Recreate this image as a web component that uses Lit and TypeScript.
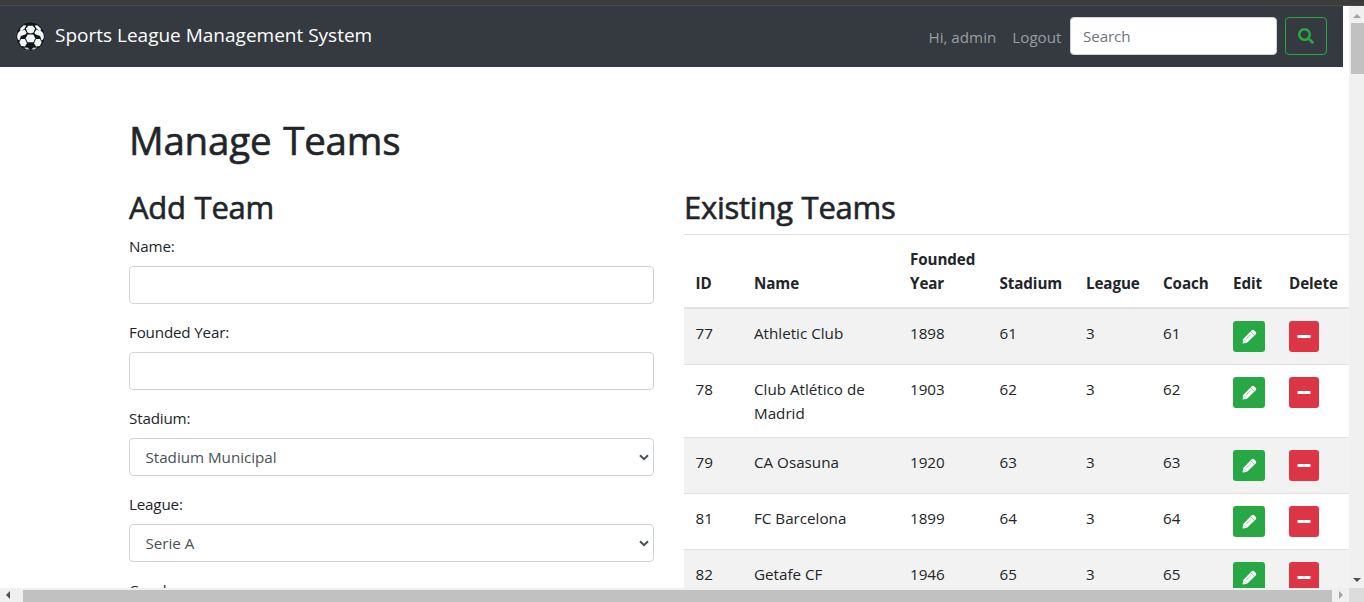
import { LitElement, html, css, svg } from "lit";
import { customElement } from "lit/decorators.js";

const TEAMS = [
  ["77", "Athletic Club", "1898", "61", "3", "61"],
  ["78", "Club Atlético de Madrid", "1903", "62", "3", "62"],
  ["79", "CA Osasuna", "1920", "63", "3", "63"],
  ["81", "FC Barcelona", "1899", "64", "3", "64"],
  ["82", "Getafe CF", "1946", "65", "3", "65"],
];

const HEADERS = ["ID", "Name", "Founded Year", "Stadium", "League", "Coach", "Edit", "Delete"];

const ball = html`<svg class="ball" viewBox="0 0 30 30">
  <circle cx="15" cy="15" r="14.3" fill="#10181b" stroke="#50575b" stroke-width=".7" />
  <g fill="#f4f4f4">
    <path d="M12.900 4.700h4.200l2.300 2.600-1.400 3.600-1.600.9h-2.800l-1.600-.9-1.400-3.600z" />
    <path d="M12.300 13h5.400l1.900 3.600-1.700 3.900h-5.800l-1.700-3.900z" />
    <path d="M5 7.200l3.400-3 2.500.2-1.700 3-4 3z" />
    <path d="M25 7.200l-3.400-3-2.500.2 1.700 3 4 3z" />
    <path d="M2 15.200l.8-3.600 2-2 4.600-1.200 1.900 3-1.300 1.700-4.300 1.400-1.400 4.300-1.500-1z" />
    <path d="M28 15.200l-.8-3.600-2-2-4.600-1.200-1.900 3 1.300 1.700 4.300 1.400 1.400 4.300 1.500-1z" />
    <path d="M5.800 17.300l3.800.2 2 4-2 3.200-3.600-.6-1.800-3.500z" />
    <path d="M24.200 17.300l-3.800.2-2 4 2 3.200 3.600-.6 1.800-3.500z" />
    <path d="M8.600 26l3.400-.3 2.400 1.900-3.300.1z" opacity=".8" />
    <path d="M21.400 26l-3.400-.3-2.400 1.900 3.300.1z" opacity=".8" />
  </g>
</svg>`;

const searchIcon = html`<svg class="search-icon" viewBox="0 0 512 512"><path fill="currentColor" d="M505 442.700L405.300 343c-4.500-4.500-10.600-7-17-7H372c27.600-35.300 44-79.700 44-128C416 93.100 322.900 0 208 0S0 93.100 0 208s93.100 208 208 208c48.300 0 92.700-16.400 128-44v16.300c0 6.400 2.500 12.500 7 17l99.700 99.700c9.400 9.400 24.600 9.400 33.900 0l28.300-28.300c9.400-9.400 9.400-24.600.1-34zM208 336c-70.700 0-128-57.200-128-128 0-70.700 57.200-128 128-128 70.700 0 128 57.200 128 128 0 70.700-57.200 128-128 128z"/></svg>`;

const pencil = html`<svg class="glyph" viewBox="0 0 16 16">
  <path fill="#fff" d="M10.400 1.400Q11.700.1 13 1.400L14.700 3.100Q15.900 4.400 14.700 5.700L5.700 14.400 1.400 15.500Q.5 15.600.6 14.700L1.500 10.300z"/>
  <path stroke="#28a745" stroke-width=".6" fill="none" d="M9.600 3.200l3.200 3.200M4.400 10.800l5.200-5.200M2.500 12l1.500 1.500"/>
</svg>`;

const minus = html`<svg class="glyph minus" viewBox="0 0 14 16"><rect x=".5" y="6" width="13" height="3" rx=".5" fill="#fff"/></svg>`;

const arrow = (d: string, fill: string, w: number, h: number) =>
  html`<svg width=${w} height=${h} viewBox="0 0 ${w} ${h}">${svg`<path d=${d} fill=${fill} />`}</svg>`;

@customElement("app-root")
export class AppRoot extends LitElement {
  static styles = css`
    :host {
      display: flex;
      flex-direction: column;
      width: 1364px;
      height: 602px;
      overflow: hidden;
      background: #fff;
      color: #212529;
      font: 15.200px/24px "Open Sans", "Noto Sans", sans-serif;
    }
    * { box-sizing: border-box; }
    svg { display: block; }
    .strip { flex: 0 0 6px; background: #3b3b3b; border-bottom: 1px solid #484a4b; }
    .window { flex: 1; min-height: 0; display: grid; grid-template: minmax(0, 1fr) 14px / 1349px 15px; }
    .page { overflow: hidden; }
    .navbar {
      display: flex; align-items: center; width: 1343px; height: 61px;
      padding: 0 16px 0 15px; background: #343a40;
    }
    .ball { width: 31px; height: 31px; }
    .brand { color: #fff; font-size: 19px; line-height: 30px; margin: -3px auto 0 9px; }
    .link { color: #9a9da0; margin-right: 16px; white-space: nowrap; }
    .link.last { margin-right: 8.500px; }
    .search {
      width: 207px; height: 38px; border: 1px solid #ced4da; border-radius: 4px; background: #fff;
      padding: 0 12px; font: inherit; color: #495057; margin-top: -1px;
    }
    .search::placeholder { color: #6c757d; opacity: 1; letter-spacing: -.1px; }
    .go {
      width: 42px; height: 38px; margin: -1px 0 0 8px; border: 1px solid #28a745; border-radius: 4px;
      color: #28a745; background: none; padding: 0; display: grid; place-items: center;
    }
    .search-icon { width: 16px; height: 16px; }
    .container { padding: 49px 0 0 129px; }
    h1, h2 { margin: 0; font-weight: 500; white-space: nowrap; -webkit-text-stroke: .6px #212529; }
    h1 { font-size: 38.500px; line-height: 48px; letter-spacing: -.2px; word-spacing: 2px; }
    h2 { font-size: 31px; line-height: 38px; margin-bottom: 8px; letter-spacing: -.25px; word-spacing: 1px; }
    .columns { display: grid; grid-template-columns: 525px 665px; column-gap: 30px; margin-top: 24px; }
    .field { display: flex; flex-direction: column; gap: 8px; margin-bottom: 16px; letter-spacing: -.18px; }
    .control { height: 38px; border: 1px solid #ced4da; border-radius: 4px; background: #fff; width: 100%; padding: 0 12px; font: inherit; }
    .select { display: flex; align-items: center; justify-content: space-between; color: #495057; padding: 0 4px 0 15.500px; letter-spacing: -.02px; }
    .row { display: grid; grid-template-columns: 58px 156px 89.500px 86.500px 77px 70px 56px 72px; }
    .row > * { padding: 12px 0 12px 12px; }
    .row > :first-child { padding-left: 11.500px; }
    .head { border-top: 1px solid #dee2e6; border-bottom: 2px solid #dee2e6; font-weight: 700; align-items: end; letter-spacing: -.1px; }
    .body { border-top: 1px solid #dee2e6; }
    .head + .body { border-top: 0; }
    .body:nth-child(even) { background: #f2f2f2; }
    .btn { height: 31px; width: 32px; border-radius: 3px; display: grid; place-items: center; background: #28a745; }
    .btn.del { width: 30px; background: #dc3545; }
    .glyph { width: 15px; height: 15px; }
    .minus { width: 14px; height: 16px; }
    .vbar { background: #f0f0f0; display: flex; flex-direction: column; align-items: center; padding: 8px 0 6px; }
    .vthumb { width: 13px; height: 51px; margin: 5px 0 auto 2px; background: #c1c1c1; }
    .hbar { background: #f0f0f0; display: flex; align-items: center; padding: 0 6px; }
    .hthumb { flex: 1; height: 12px; margin: 2px 7px 0 13px; background: #c1c1c1; }
    .corner { background: #dcdcdc; }
  `;

  private label(text: string) {
    return html`<span>${text}</span>`;
  }

  private input(text: string) {
    return html`<div class="field">${this.label(text)}<input class="control" /></div>`;
  }

  private select(text: string, value: string) {
    return html`<div class="field">${this.label(text)}
      <div class="control select"><span>${value}</span>
        <svg width="10" height="7" viewBox="0 0 10 7"><path d="M1 1.200l4 4 4-4" fill="none" stroke="#495057" stroke-width="2"/></svg>
      </div></div>`;
  }

  render() {
    return html`
      <div class="strip"></div>
      <div class="window">
        <div class="page">
          <nav class="navbar">
            ${ball}<span class="brand">Sports League Management System</span>
            <span class="link">Hi, admin</span><span class="link last">Logout</span>
            <input class="search" placeholder="Search" />
            <button class="go" aria-label="Search">${searchIcon}</button>
          </nav>
          <main class="container">
            <h1>Manage Teams</h1>
            <div class="columns">
              <section>
                <h2>Add Team</h2>
                ${this.input("Name:")}${this.input("Founded Year:")}
                ${this.select("Stadium:", "Stadium Municipal")}
                ${this.select("League:", "Serie A")}${this.select("Coach:", "")}
              </section>
              <section>
                <h2>Existing Teams</h2>
                <div>
                  <div class="row head">${HEADERS.map((h) => html`<span>${h}</span>`)}</div>
                  ${TEAMS.map((t) => html`<div class="row body">
                    ${t.map((c) => html`<span>${c}</span>`)}
                    <div><div class="btn">${pencil}</div></div>
                    <div><div class="btn del">${minus}</div></div>
                  </div>`)}
                </div>
              </section>
            </div>
          </main>
        </div>
        <div class="vbar">
          ${arrow("M0 4L4 0l4 4z", "#a3a3a3", 8, 4)}
          <div class="vthumb"></div>
          ${arrow("M0 0l4 4 4-4z", "#505050", 8, 4)}
        </div>
        <div class="hbar">
          ${arrow("M4 0L0 4l4 4z", "#505050", 4, 8)}
          <div class="hthumb"></div>
          ${arrow("M0 0l4 4-4 4z", "#a3a3a3", 4, 8)}
        </div>
        <div class="corner"></div>
      </div>
    `;
  }
}
